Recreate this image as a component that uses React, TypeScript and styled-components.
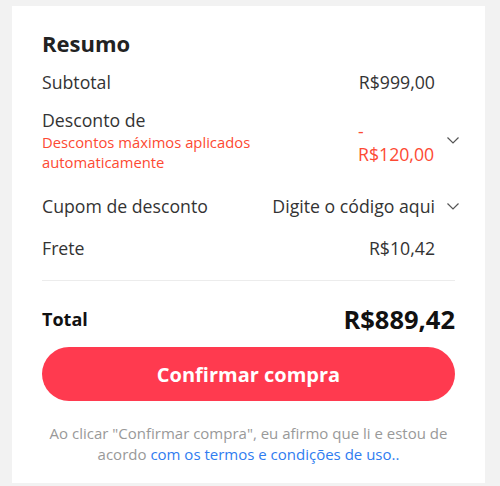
import React from "react"
import styled, { createGlobalStyle } from "styled-components"

const GlobalStyle = createGlobalStyle`
  body {
    margin: 0;
    background: #f2f2f2;
    font-family: "Open Sans", "Noto Sans", sans-serif;
    color: #333;
  }
`

const Page = styled.div`
  padding: 6px 15px 3px 12px;
`

const Card = styled.div`
  background: #fff;
  padding: 23px 30px 18px 30px;
`

const Title = styled.h2`
  margin: 0 0 3px 0;
  font-size: 22px;
  line-height: 29px;
  font-weight: 700;
  color: #222;
`

const Row = styled.div<{ $top?: number; $bottom?: number }>`
  display: flex;
  align-items: flex-start;
  justify-content: space-between;
  padding-top: ${({ $top }) => $top ?? 9}px;
  padding-bottom: ${({ $bottom }) => $bottom ?? 9}px;
  font-size: 17.7px;
  line-height: 24px;
`

const LabelCol = styled.div`
  display: flex;
  flex-direction: column;
`

const Hint = styled.div`
  font-size: 14.8px;
  line-height: 20px;
  color: #fd4a33;
  max-width: 240px;
`

const Right = styled.div`
  display: flex;
  align-items: center;
  align-self: stretch;
`

const Value = styled.span`
  color: #333;
`

const Discount = styled.span`
  width: 77px;
  color: #fd4a33;
  line-height: 23px;
  margin-top: 12px;
  align-self: flex-start;
`

const Slot = styled.span`
  width: 20px;
  display: flex;
  justify-content: flex-end;
  svg {
    margin-right: -4px;
  }
`

const Divider = styled.hr`
  border: none;
  border-top: 1px solid #ececec;
  margin: 11px 0 0 0;
`

const TotalRow = styled.div`
  display: flex;
  justify-content: space-between;
  align-items: center;
  margin-top: 22px;
  height: 32px;
  color: #111;
  font-weight: 700;
`

const TotalLabel = styled.span`
  font-size: 18px;
`

const TotalValue = styled.span`
  font-size: 25.5px;
`

const Button = styled.button`
  display: block;
  width: 100%;
  height: 54px;
  margin-top: 12px;
  border: none;
  border-radius: 27px;
  background: #ff3a4f;
  color: #fff;
  font-family: "Open Sans", "Noto Sans", sans-serif;
  font-size: 20px;
  font-weight: 700;
  cursor: pointer;
`

const Footer = styled.p`
  margin: 22px 0 0 0;
  text-align: center;
  font-size: 15px;
  line-height: 21px;
  color: #999;
`

const Link = styled.a`
  color: #2f7cf0;
  text-decoration: none;
`

const Chevron = () => (
  <svg width="12" height="7" viewBox="0 0 12 7" fill="none">
    <path d="M0.5 0.5 L6 6 L11.5 0.5" stroke="#555" strokeWidth="1.2" />
  </svg>
)

export default function App() {
  return (
    <Page>
      <GlobalStyle />
      <Card>
        <Title>Resumo</Title>
        <Row>
          <span>Subtotal</span>
          <Right>
            <Value>R$999,00</Value>
            <Slot />
          </Right>
        </Row>
        <Row $top={5} $bottom={13}>
          <LabelCol>
            <span>Desconto de</span>
            <Hint>Descontos máximos aplicados automaticamente</Hint>
          </LabelCol>
          <Right>
            <Discount>- R$120,00</Discount>
            <Slot>
              <Chevron />
            </Slot>
          </Right>
        </Row>
        <Row>
          <span>Cupom de desconto</span>
          <Right>
            <Value>Digite o código aqui</Value>
            <Slot>
              <Chevron />
            </Slot>
          </Right>
        </Row>
        <Row>
          <span>Frete</span>
          <Right>
            <Value>R$10,42</Value>
            <Slot />
          </Right>
        </Row>
        <Divider />
        <TotalRow>
          <TotalLabel>Total</TotalLabel>
          <TotalValue>R$889,42</TotalValue>
        </TotalRow>
        <Button>Confirmar compra</Button>
        <Footer>
          Ao clicar "Confirmar compra", eu afirmo que li e estou de acordo{" "}
          <Link href="#">com os termos e condições de uso..</Link>
        </Footer>
      </Card>
    </Page>
  )
}
